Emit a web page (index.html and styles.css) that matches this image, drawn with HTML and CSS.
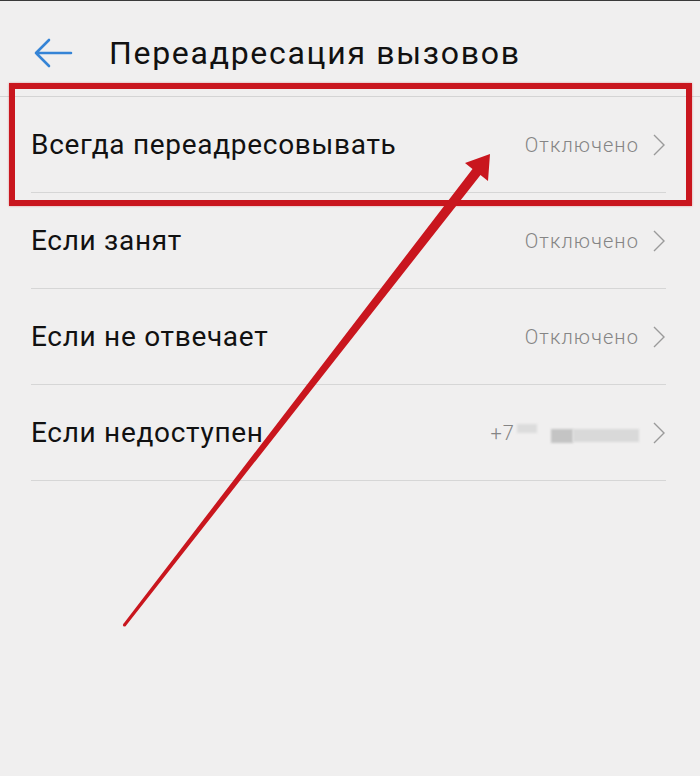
FILE: index.html
```html
<!DOCTYPE html>
<html lang="ru">
<head>
  <meta charset="UTF-8" />
  <meta name="viewport" content="width=device-width, initial-scale=1.0"/>
  <title>Переадресация вызовов</title>
  <link rel="stylesheet" href="styles.css">
</head>
<body>
  <div class="screen">
    <header class="app-bar">
      <a class="back" href="#">
        <svg width="40" height="36" viewBox="0 0 40 36">
          <path d="M3 18 H38 M16 5 L3 18 L16 31" fill="none" stroke="#3584d6" stroke-width="2.6" stroke-linecap="round" stroke-linejoin="round"/>
        </svg>
      </a>
      <h1>Переадресация вызовов</h1>
    </header>

    <ul class="list">
      <li class="row">
        <span class="label">Всегда переадресовывать</span>
        <span class="value">Отключено</span>
        <svg class="chev" width="14" height="24" viewBox="0 0 14 24"><path d="M2 2 L12 12 L2 22" fill="none" stroke="#9a9a9a" stroke-width="1.4"/></svg>
      </li>
      <li class="row">
        <span class="label">Если занят</span>
        <span class="value">Отключено</span>
        <svg class="chev" width="14" height="24" viewBox="0 0 14 24"><path d="M2 2 L12 12 L2 22" fill="none" stroke="#9a9a9a" stroke-width="1.4"/></svg>
      </li>
      <li class="row">
        <span class="label">Если не отвечает</span>
        <span class="value">Отключено</span>
        <svg class="chev" width="14" height="24" viewBox="0 0 14 24"><path d="M2 2 L12 12 L2 22" fill="none" stroke="#9a9a9a" stroke-width="1.4"/></svg>
      </li>
      <li class="row">
        <span class="label">Если недоступен</span>
        <span class="value phone">+7<span class="blur b1"></span><span class="blur b2"></span><span class="blur b3"></span></span>
        <svg class="chev" width="14" height="24" viewBox="0 0 14 24"><path d="M2 2 L12 12 L2 22" fill="none" stroke="#9a9a9a" stroke-width="1.4"/></svg>
      </li>
    </ul>

    <!-- annotation on top of the screenshot -->
    <div class="highlight"></div>
    <svg class="pointer" width="700" height="776" viewBox="0 0 700 776">
      <polygon points="490,153 488,180 480.5,174 125.7,625 123.3,623 472.5,168 465,162" fill="#c9161e"/>
      <circle cx="124.5" cy="624" r="1.6" fill="#c9161e"/>
    </svg>
  </div>
</body>
</html>
```

FILE: styles.css
```css
body {
  margin: 0;
  background: #f0efef;
  font-family: Roboto, "Noto Sans", sans-serif;
  color: #141414;
}
.screen {
  position: relative;
  width: 700px;
  height: 776px;
  border-top: 1px solid #3a3a3a;
  box-sizing: border-box;
  overflow: hidden;
}
.app-bar {
  display: flex;
  align-items: center;
  height: 96px;
  padding-top: 8px;
  box-sizing: border-box;
  border-bottom: 1px solid #d4d4d4;
}
.back {
  display: flex;
  margin-left: 33px;
  margin-right: 36px;
}
.app-bar h1 {
  margin: 0;
  font-size: 32px;
  font-weight: 400;
  color: #111;
  letter-spacing: 1.7px;
}
.list {
  list-style: none;
  margin: 0;
  padding: 0 34px 0 31px;
}
.row {
  display: flex;
  align-items: center;
  height: 95px;
  border-bottom: 1px solid #d6d6d6;
}
.label {
  flex: 1;
  font-size: 28px;
  color: #111;
  letter-spacing: 0.7px;
}
.value {
  font-size: 20px;
  font-weight: 300;
  color: #858585;
  letter-spacing: 1.1px;
  margin-right: 13px;
}
.chev { display: block; }
.phone {
  display: flex;
  align-items: center;
}
.blur {
  display: inline-block;
  filter: blur(1.2px);
}
.b1 {
  width: 20px;
  height: 9px;
  margin: 0 14px 8px 2px;
  background: #dcdcdc;
}
.b2 {
  width: 22px;
  height: 14px;
  margin-top: 6px;
  background: #c4c4c4;
}
.b3 {
  width: 66px;
  height: 13px;
  margin-top: 6px;
  background: #d9d9d9;
}
.highlight {
  position: absolute;
  left: 9px;
  top: 82px;
  width: 683px;
  height: 123px;
  border: 6px solid #c9161e;
  box-sizing: border-box;
  box-shadow: 0 0 2px rgba(201, 22, 30, 0.4);
}
.pointer {
  position: absolute;
  left: 0;
  top: 0;
}
```
